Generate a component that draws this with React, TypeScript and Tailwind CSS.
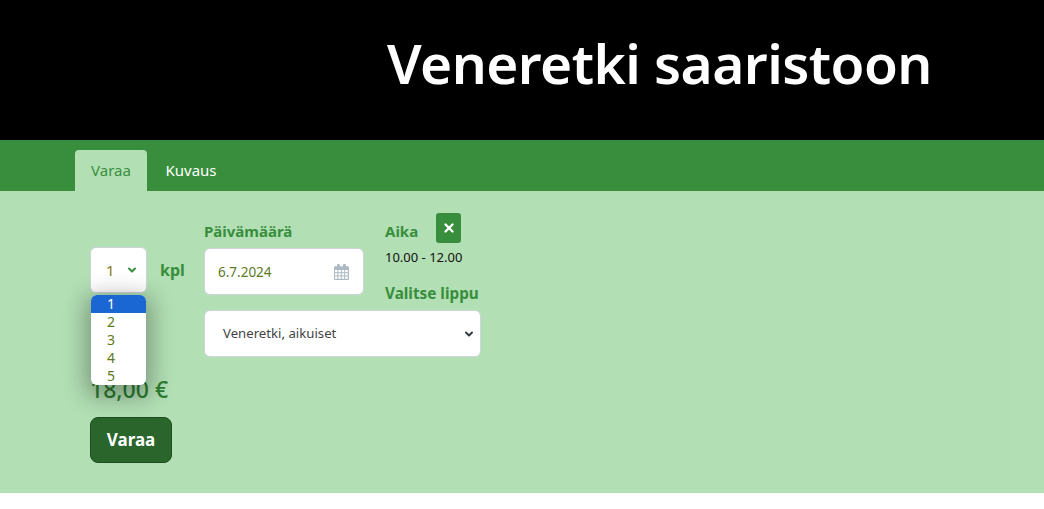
import { ChevronDown, X } from "lucide-react";

const FONT = "font-['Noto_Sans','Open_Sans',sans-serif]";

function CalendarIcon() {
  return (
    <svg width="15" height="16" viewBox="0 0 15 16" className="text-[#adb9c4]" fill="currentColor">
      <rect x="3" y="0" width="3" height="4" rx="1.2" />
      <rect x="9" y="0" width="3" height="4" rx="1.2" />
      <path d="M0 3.5A1.2 1.2 0 0 1 1.2 2.3H13.8A1.2 1.2 0 0 1 15 3.5V14.8A1.2 1.2 0 0 1 13.8 16H1.2A1.2 1.2 0 0 1 0 14.8Z" />
      <g fill="#fff">
        <rect x="1" y="6" width="2.4" height="2.2" />
        <rect x="4.4" y="6" width="2.4" height="2.2" />
        <rect x="7.8" y="6" width="2.4" height="2.2" />
        <rect x="11.2" y="6" width="2.6" height="2.2" />
        <rect x="1" y="9.2" width="2.4" height="2.2" />
        <rect x="4.4" y="9.2" width="2.4" height="2.2" />
        <rect x="7.8" y="9.2" width="2.4" height="2.2" />
        <rect x="11.2" y="9.2" width="2.6" height="2.2" />
        <rect x="1" y="12.4" width="2.4" height="2.4" />
        <rect x="4.4" y="12.4" width="2.4" height="2.4" />
        <rect x="7.8" y="12.4" width="2.4" height="2.4" />
        <rect x="11.2" y="12.4" width="2.6" height="2.4" />
      </g>
    </svg>
  );
}

export default function App() {
  return (
    <div className={`${FONT} min-h-[509px] bg-white`}>
      <header className="h-[140px] bg-black pl-[387px] pt-[23px]">
        <h1 className="text-[55px] leading-[80px] font-semibold text-white tracking-[-0.55px]">Veneretki saaristoon</h1>
      </header>

      <nav className="h-[51px] bg-[#388e3c] pl-[75px] pt-[10px] flex text-[15px]">
        <span className="w-[72px] h-[41px] bg-[#b2dfb4] rounded-t-[4px] text-[#388e3c] flex items-center justify-center">Varaa</span>
        <span className="w-[88px] h-[41px] text-white flex items-center justify-center">Kuvaus</span>
      </nav>

      <main className="h-[302px] bg-[#b2dfb4] pl-[90px] pt-[22px] flex text-[#388e3c]">
        {/* kappalemäärä, hinta ja varausnappi */}
        <div className="w-[114px] pt-[34px] relative">
          <div className="flex items-center">
            <div className="relative z-10 w-[57px] h-[46px] bg-white rounded-[6px] border border-[#ced4da] flex items-center pl-[15px] pr-[8px] justify-between text-[15px] text-[#8a7a10]">
              1
              <ChevronDown size={12} strokeWidth={4} className="text-[#388e3c]" />
            </div>
            <span className="ml-[13px] text-[16px] font-bold">kpl</span>
          </div>
          <div className="mt-[80px] text-[23px] leading-[32px] font-medium text-[#2e7d32]">18,00 €</div>
          <button className="mt-[12px] w-[82px] h-[46px] rounded-[8px] bg-[#2a652b] border border-[#1b4d1d] text-white text-[17px] font-bold">Varaa</button>

          {/* avoin valikko */}
          <ul className="absolute z-20 left-[1px] top-[82px] w-[55px] h-[90px] bg-white rounded-[6px] overflow-hidden shadow-[0_6px_22px_6px_rgba(0,0,0,0.3)] text-[14px] leading-[18px] text-[#5d7a1e]">
            <li className="bg-[#1a66d2] text-white pl-[16px]">1</li>
            <li className="pl-[16px]">2</li>
            <li className="pl-[16px]">3</li>
            <li className="pl-[16px]">4</li>
            <li className="pl-[16px]">5</li>
          </ul>
        </div>

        {/* päivä, aika ja lippu */}
        <div className="w-[277px]">
          <div className="flex">
            <div className="w-[181px]">
              <div className="pt-[8px] h-[35px] text-[15px] leading-[20px] font-bold">Päivämäärä</div>
              <div className="w-[160px] h-[47px] bg-white rounded-[6px] border border-[#ced4da] flex items-center justify-between pl-[13px] pr-[14px] pt-[1px] text-[13.5px] text-[#5d7a1e]">
                6.7.2024
                <CalendarIcon />
              </div>
            </div>
            <div>
              <div className="flex items-center h-[30px]">
                <span className="w-[51px] text-[15px] font-bold pt-[6px]">Aika</span>
                <button className="w-[25px] h-[30px] bg-[#388e3c] rounded-[3px] flex items-center justify-center text-white">
                  <X size={14} strokeWidth={4} />
                </button>
              </div>
              <div className="mt-[4px] text-[13px] leading-[20px] text-[#111]">10.00 - 12.00</div>
            </div>
          </div>
          <div className="text-[15.3px] leading-[20px] font-bold pl-[181px] mt-[-12px]">Valitse lippu</div>
          <div className="mt-[7px] h-[47px] bg-white rounded-[6px] border border-[#ced4da] flex items-center justify-between pl-[18px] pr-[5px] pt-[1px] text-[13.2px] text-[#444]">
            Veneretki, aikuiset
            <ChevronDown size={12} strokeWidth={4} className="text-[#343a40]" />
          </div>
        </div>
      </main>
    </div>
  );
}
